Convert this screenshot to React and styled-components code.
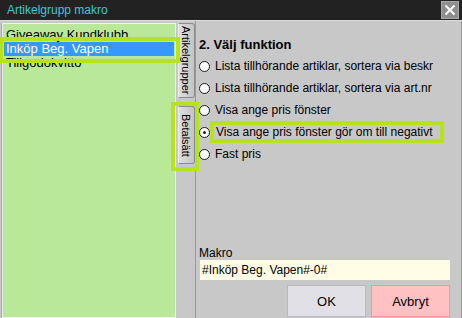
import React from 'react';
import styled, { createGlobalStyle } from 'styled-components';

const GlobalStyle = createGlobalStyle`
  html, body {
    margin: 0;
    padding: 0;
    background: #c8c8c8;
  }
  body {
    font-family: "Liberation Sans", Arial, sans-serif;
  }
`;

const MARK = '#b6e31c';

const Window = styled.div`
  width: 462px;
  height: 318px;
  display: flex;
  flex-direction: column;
  background: #c8c8c8;
  overflow: hidden;
`;

const TitleBar = styled.div`
  height: 20px;
  flex: none;
  display: flex;
  align-items: center;
  justify-content: space-between;
  background: #222222;
  border-bottom: 1px solid #dcdcdc;
  padding-left: 7px;
  color: #3fc6d6;
  font-size: 12px;
`;

const CloseButton = styled.div`
  width: 18px;
  height: 18px;
  margin: 0 3px 1px 0;
  background: #8e8e8e;
  border: 1px solid #a8a8a8;
  box-sizing: border-box;
  display: flex;
  align-items: center;
  justify-content: center;
`;

const Body = styled.div`
  flex: 1;
  display: flex;
  min-height: 0;
  border-right: 1px solid #9a9a9a;
`;

const ListPanel = styled.div`
  width: 174px;
  margin: 2px 0 0 2px;
  background: #b8e898;
  border: 1px solid #f2f2f2;
  border-left: 1px solid #ececec;
  box-shadow: -1px 0 0 #a8a8a8;
  padding-top: 4px;
  box-sizing: border-box;
  font-size: 13px;
`;

const ListItem = styled.div`
  position: relative;
  height: 14px;
  line-height: 14px;
  padding-left: 2px;
  margin: 0 1px 0 1px;
  color: ${p => (p.$selected ? '#ffffff' : '#000000')};
  background: ${p => (p.$selected ? '#3399ff' : 'transparent')};
  white-space: nowrap;

  ${p => p.$marked && `
    &::after {
      content: '';
      position: absolute;
      left: -5px;
      right: -6px;
      top: -5px;
      bottom: -7px;
      border: 4px solid ${MARK};
      z-index: 2;
    }
  `}
`;

const TabStrip = styled.div`
  width: 18px;
  flex: none;
  display: flex;
  flex-direction: column;
  align-items: center;
  gap: 8px;
  padding: 2px 0 0 1px;
`;

const Tab = styled.div`
  position: relative;
  width: 17px;
  height: ${p => p.$h}px;
  box-sizing: border-box;
  writing-mode: vertical-rl;
  display: flex;
  align-items: center;
  justify-content: center;
  font-size: 11px;
  color: #000;
  background: linear-gradient(to right, #dedede, #c4c4c4);
  border: 1px solid #8c8c8c;
  border-left-color: #ececec;
  border-radius: 0 3px 3px 0;

  ${p => p.$marked && `
    &::after {
      content: '';
      position: absolute;
      left: -8px;
      right: -5px;
      top: -5px;
      bottom: -8px;
      border: 4px solid ${MARK};
    }
  `}
`;

const Content = styled.div`
  flex: 1;
  display: flex;
  flex-direction: column;
  border-left: 1px solid #9a9a9a;
  padding: 16px 11px 0 3px;
  font-size: 12px;
`;

const Heading = styled.div`
  font-weight: bold;
  font-size: 13px;
  line-height: 16px;
  margin-bottom: 2px;
`;

const RadioRow = styled.div`
  height: 22px;
  display: flex;
  align-items: center;
  gap: 3px;
`;

const RadioDot = styled.span`
  width: 11px;
  height: 11px;
  flex: none;
  box-sizing: border-box;
  border-radius: 50%;
  border: 1px solid #1a1a1a;
  background: #ffffff;
  display: flex;
  align-items: center;
  justify-content: center;

  &::after {
    content: '';
    width: 3px;
    height: 3px;
    border-radius: 50%;
    background: ${p => (p.$checked ? '#222' : 'transparent')};
  }
`;

const RadioLabel = styled.span`
  line-height: 14px;
  padding: 0 7px 0 2px;
  white-space: nowrap;
  outline: ${p => (p.$marked ? `4px solid ${MARK}` : 'none')};
  margin-left: ${p => (p.$marked ? '1px' : '0')};
`;

const Spacer = styled.div`
  flex: 1;
`;

const FieldLabel = styled.div`
  line-height: 14px;
  margin-bottom: 0;
`;

const MacroInput = styled.div`
  height: 20px;
  line-height: 20px;
  background: #fffde6;
  padding-left: 2px;
  margin-left: 1px;
`;

const ButtonRow = styled.div`
  display: flex;
  justify-content: flex-end;
  gap: 5px;
  margin: 5px 0 1px 0;
`;

const Button = styled.div`
  width: 79px;
  height: 32px;
  box-sizing: border-box;
  display: flex;
  align-items: center;
  justify-content: center;
  font-size: 13px;
  background: ${p => (p.$danger ? '#ffc1c1' : '#e1e0e6')};
  border: 1px solid ${p => (p.$danger ? '#f19a9a' : '#b8b8bf')};
`;

const items = ['Giveaway Kundklubb', 'Inköp Beg. Vapen', 'Tillgodokvitto'];

const options = [
  'Lista tillhörande artiklar, sortera via beskr',
  'Lista tillhörande artiklar, sortera via art.nr',
  'Visa ange pris fönster',
  'Visa ange pris fönster gör om till negativt',
  'Fast pris',
];

const App = () => {
  const selected = 3;
  return (
    <>
      <GlobalStyle />
      <Window>
        <TitleBar>
          <span>Artikelgrupp makro</span>
          <CloseButton>
            <svg width="12" height="12" viewBox="0 0 12 12">
              <path d="M1.5 1.5 L10.5 10.5 M10.5 1.5 L1.5 10.5" stroke="#fff" strokeWidth="2" />
            </svg>
          </CloseButton>
        </TitleBar>
        <Body>
          <ListPanel>
            {items.map((it, i) => (
              <ListItem key={it} $selected={i === 1} $marked={i === 1}>
                {it}
              </ListItem>
            ))}
          </ListPanel>
          <TabStrip>
            <Tab $h={75}>Artikelgrupper</Tab>
            <Tab $h={58} $marked>Betalsätt</Tab>
          </TabStrip>
          <Content>
            <Heading>2. Välj funktion</Heading>
            {options.map((o, i) => (
              <RadioRow key={o}>
                <RadioDot $checked={i === selected} />
                <RadioLabel $marked={i === selected}>{o}</RadioLabel>
              </RadioRow>
            ))}
            <Spacer />
            <FieldLabel>Makro</FieldLabel>
            <MacroInput>#Inköp Beg. Vapen#-0#</MacroInput>
            <ButtonRow>
              <Button>OK</Button>
              <Button $danger>Avbryt</Button>
            </ButtonRow>
          </Content>
        </Body>
      </Window>
    </>
  );
};

export default App;
